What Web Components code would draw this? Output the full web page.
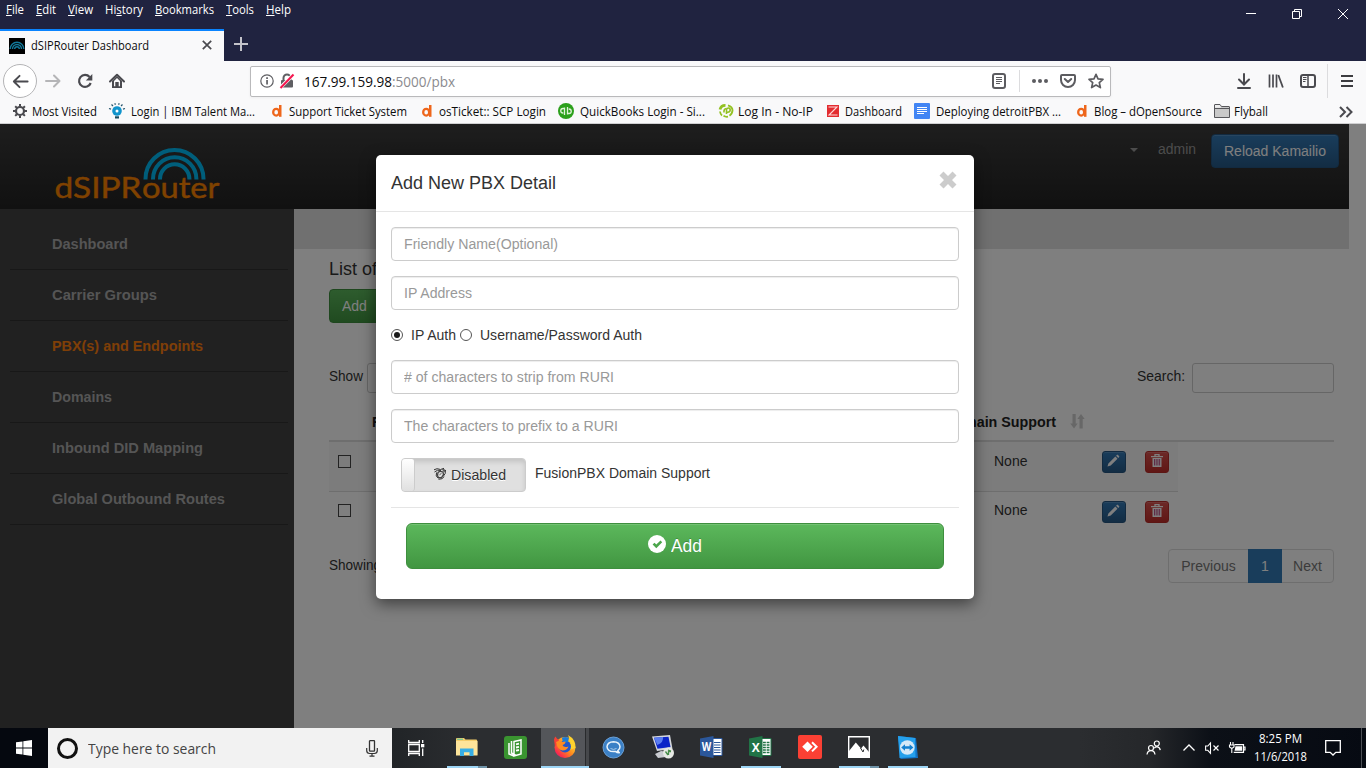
<!DOCTYPE html>
<html lang="en">
<head>
<meta charset="utf-8">
<title>dSIPRouter Dashboard</title>
<style>
html,body{margin:0;height:100%;overflow:hidden;background:#202340}
</style>
</head>
<body>
<browser-window></browser-window>
<script>
const define = (name, html, setup) => customElements.define(name, class extends HTMLElement {
  connectedCallback() {
    if (this.shadowRoot) return;
    this.attachShadow({mode: 'open'}).innerHTML = html;
    if (setup) setup(this, this.shadowRoot);
  }
});
const UI = "font-family:'Open Sans','Noto Sans',sans-serif;";
const WEB = "font-family:'Liberation Sans',Arial,sans-serif;";

/* One line of text condensed or widened to the given width */
define('fit-text', `<style>:host{display:block;white-space:nowrap;flex:none}span{display:inline-block;transform-origin:0 50%}</style><span><slot></slot></span>`,
  (h, r) => {
    const s = r.querySelector('span'), w = +h.getAttribute('w');
    if (!w) return;
    h.style.width = w + 'px';
    const fit = () => { s.style.transform = ''; const n = s.getBoundingClientRect().width; if (n) s.style.transform = `scaleX(${w / n})`; };
    fit();
    requestAnimationFrame(fit);
  });

/* Icon set */
const ICONS = {
  back: [20,20,'<path d="M17.5 10H3M9 4L3 10l6 6" fill="none" stroke="#4a4a4f" stroke-width="2" stroke-linecap="round" stroke-linejoin="round"/>'],
  fwd: [16,16,'<path d="M1 8h13M9 2.5L14.500 8 9 13.500" fill="none" stroke="#b5b5b7" stroke-width="2" stroke-linecap="round" stroke-linejoin="round"/>'],
  reload: [16,16,'<path d="M12.600 4A6 6 0 1 0 13.700 10" fill="none" stroke="#4a4a4f" stroke-width="2.200"/><path d="M15.300 1v6.500H8.800z" fill="#4a4a4f"/>'],
  home: [16,16,'<path d="M1 8.500L8 1.700l7 6.800" fill="none" stroke="#4a4a4f" stroke-width="2" stroke-linecap="round" stroke-linejoin="round"/><path d="M3 8l5-5 5 5v7H3z" fill="#4a4a4f"/><path d="M5 8l3-3 3 3v5.200H9.700V9H6.300v4.200H5z" fill="#f9f9fa"/><path d="M7 9.500h2V12H7z" fill="#4a4a4f"/>'],
  info: [14,14,'<circle cx="7" cy="7" r="6.200" fill="none" stroke="#5f5f63" stroke-width="1.200"/><path d="M6.200 6h1.700v4.500H6.200zM6.200 3.300h1.700v1.600H6.200z" fill="#5f5f63"/>'],
  lock: [16,16,'<path d="M4.500 8V5a3.500 3.500 0 0 1 7 0v3" fill="none" stroke="#5f5f63" stroke-width="2"/><rect x="2" y="7" width="12" height="7.500" rx="1" fill="#5f5f63"/><path d="M1.500 14.500L14.500 1.500" stroke="#fff" stroke-width="3.600"/><path d="M1.500 15L14.500 1.500" stroke="#f5164e" stroke-width="2"/>'],
  reader: [14,16,'<rect x="1" y="1" width="12" height="14" rx="2" fill="none" stroke="#5c5c60" stroke-width="2"/><path d="M4 4.500h6M4 6.500h6M4 8.500h6M4 10.500h4" stroke="#5c5c60"/>'],
  dots: [16,16,'<g fill="#5c5c60"><circle cx="2" cy="8" r="2"/><circle cx="8" cy="8" r="2"/><circle cx="14" cy="8" r="2"/></g>'],
  pocket: [16,16,'<path d="M2 2h12q1 0 1 1v4a7 7 0 0 1-14 0V3q0-1 1-1z" fill="none" stroke="#5c5c60" stroke-width="2"/><path d="M4.800 6L8 9l3.200-3" fill="none" stroke="#5c5c60" stroke-width="2" stroke-linecap="round" stroke-linejoin="round"/>'],
  star: [16,16,'<path d="M8 1.300l2 4.500 5 .5-3.700 3.300 1.100 5L8 12l-4.400 2.600 1.100-5L1 6.300l5-.5z" fill="none" stroke="#5c5c60" stroke-width="1.700" stroke-linejoin="round"/>'],
  down: [14,16,'<path d="M7 1v10M2 6.500L7 11.500l5-5M1 15h12" fill="none" stroke="#4a4a4f" stroke-width="2" stroke-linecap="round"/>'],
  lib: [16,16,'<path d="M1.500 1.500v13M5 1.500v13M8.500 1.500v13" stroke="#4a4a4f" stroke-width="1.700"/><path d="M10.300 2l4.600 12.500" stroke="#4a4a4f" stroke-width="1.800"/>'],
  side: [16,16,'<rect x="1" y="2" width="14" height="12" rx="2" fill="none" stroke="#4a4a4f" stroke-width="2"/><path d="M8 2v12" stroke="#4a4a4f" stroke-width="1.500"/><path d="M3 4.500h3.500M3 6.500h3.500M3 8.500h2.500" stroke="#4a4a4f"/>'],
  menu: [14,14,'<path d="M1 2h12M1 7h12M1 12h12" stroke="#3c3c40" stroke-width="2"/>'],
  gear: [16,16,'<circle cx="8" cy="8" r="4" fill="none" stroke="#4a4a4f" stroke-width="2.200"/><g stroke="#4a4a4f" stroke-width="2"><path d="M8 1v2.500M8 12.500V15M1 8h2.500M12.500 8H15M3.200 3.200l1.700 1.700M11.200 11.200l1.700 1.700M3.200 12.900l1.700-1.700M11.200 4.900l1.700-1.700"/></g>'],
  bulb: [16,16,'<circle cx="8" cy="8" r="4.800" fill="#1194cc"/><circle cx="8" cy="8" r="1.500" fill="#fff"/><path d="M6 13.300h4V15.500H6z" fill="#174a5e"/><g stroke="#24536a" stroke-width="1.200"><path d="M0 5.500l2 .6M16 5.500l-2 .6M2.500 1.500L4 3M13.500 1.500L12 3M5.800.2l.6 1.600M10.200.2l-.6 1.600"/></g>'],
  d: [16,16,'<ellipse cx="7.200" cy="9.200" rx="3" ry="3.400" fill="none" stroke="#ee661b" stroke-width="2.300"/><path d="M10 2h2.500v11.800H10z" fill="#ee661b"/>'],
  qb: [16,16,'<circle cx="8" cy="8" r="8" fill="#2ca01c"/><g fill="none" stroke="#dff3d8" stroke-width="1.300"><path d="M6.500 4.500v7.500M6.500 5.500H5a2.200 2.200 0 0 0 0 4.500h.3M9.500 11.500V4M9.500 10.500H11a2.200 2.200 0 0 0 0-4.500h-.3"/></g>'],
  noip: [16,16,'<g fill="none" stroke="#93c122"><path d="M7.500 2.300A5.500 5.500 0 0 0 2 6.500" stroke-width="2.800"/><path d="M2 8.500q.3 2.500 2 4" stroke-width="1.800"/><path d="M5.500 12.800q2 1.300 4.500.9" stroke-width="1.800"/><path d="M6 9.500q-.5-3.500 2.500-4" stroke-width="1.600"/><path d="M8.500 11V6.500q.5-1.800 2.500-1.500 1.700.8 1 3-1 1.500-3 1.300" stroke-width="1.600"/><path d="M10 2.300q4.500 1.200 4.500 5.200-.3 3.500-3 5.200" stroke-width="1.900"/></g>'],
  z: [12,12,'<path d="M0 0h12v12H0z" fill="#e32c30"/><path d="M1.500 2H10L2 10h8.500" fill="none" stroke="#ffd9d9" stroke-width="1.100"/>'],
  doc: [16,16,'<rect width="16" height="16" rx="1" fill="#4285f4"/><path d="M3 4.500h10M3 6.500h10M3 8.500h10M3 10.500h7" stroke="#fff"/>'],
  folder: [16,14,'<path d="M.5 13.500V1q0-.5.5-.5h5l1.500 2H15q.5 0 .5.500v10.500z" fill="#c9c9c9" stroke="#57575b"/><path d="M1 4.500h14" stroke="#57575b"/><path d="M1 1h4.800l1.200 2.700H1z" fill="#eee"/>'],
  chev: [14,12,'<path d="M1 1l5 5-5 5M7.500 1l5 5-5 5" fill="none" stroke="#4a4a4f" stroke-width="2"/>'],
  fav: [16,16,'<path d="M0 0h16v16H0z" fill="#000"/><g fill="none" stroke="#127798" stroke-width="1.400"><path d="M1.200 11a6.800 6.800 0 0 1 13.600 0M3.500 11a4.500 4.500 0 0 1 9 0M5.700 11a2.300 2.300 0 0 1 4.600 0"/></g>'],
  x: [10,10,'<path d="M.8.8l8.400 8.400M9.200.8L.8 9.200" stroke="#4a4a4f" stroke-width="1.700"/>'],
  plus: [14,14,'<path d="M7 0v14M0 7h14" stroke="#c3c3ca" stroke-width="2"/>'],
  min: [10,10,'<path d="M0 4.500h10" stroke="#fff"/>'],
  max: [10,10,'<path d="M.5 2.500h7v7h-7zM2.500 2.500v-2h7v7h-2" fill="none" stroke="#fff"/>'],
  close: [10,10,'<path d="M0 0l10 10M10 0L0 10" stroke="#fff"/>'],
  bigx: [18,18,'<path d="M4.500.5L9 5 13.500.5l4 4L13 9l4.500 4.500-4 4L9 13l-4.500 4.500-4-4L5 9 .5 4.500z" fill="#ccc"/>'],
  hand: [12,12,'<path d="M0 1.800Q3-.3 6.500 1.500L10 .3M.5 4Q3.500 1.200 7 2.500M11.500 2Q12 6 9 8.500M2.500 4.500Q1.300 8.500 4 10M4.500 11.300Q8.500 11.500 10.300 8.500" fill="none" stroke="#333"/><path d="M4 4.500q2-1.800 5-.5l.5 2.500-2 3-3 .2-1-2.200z" fill="none" stroke="#444" stroke-width="1.300"/><path d="M5.500 6.800l2-1.500M8.500 1.500l2.200.3-.5 2z" stroke="#555" fill="#555"/>'],
  ok: [18,18,'<circle cx="9" cy="9" r="9" fill="#fff"/><path d="M4.600 9.600l1.900-1.900 1.800 1.700 4.200-4 1.700 1.900-5.900 6z" fill="#4ca64c"/>'],
  sort: [15,15,'<path d="M2.500 0h3.200v9.500h2L4 14.500.2 9.500h2.300zM9.500 14.500h3.200V5h2L11 0 7.300 5h2.200z" fill="#cfcfcf"/>'],
  pencil: [14,14,'<path d="M.5 13.500l1-3.300L9 2.700l2.300 2.300L4 12.500zM9.800 1.900l1-1q.3-.4.800 0l1.500 1.500q.3.400 0 .8l-1 1z" fill="#fff"/>'],
  trash: [12,13,'<path d="M4 2V.6h4V2M0 2.600h12" fill="none" stroke="#fff" stroke-width="1.300"/><path d="M1.500 4h9v9h-9z" fill="#fff"/><path d="M3.500 5v6.500M5.200 5v6.500M6.900 5v6.500M8.600 5v6.500" stroke="#b8437f" stroke-width=".9"/>'],
  win: [16,16,'<path d="M0 2.300l6.500-.9v6.200H0zM7.300 1.300L16 0v7.600H7.300zM0 8.400h6.500v6.200L0 13.700zM7.300 8.400H16V16l-8.700-1.300z" fill="#fff"/>'],
  mic: [12,17,'<rect x="3.500" y=".7" width="5" height="10.500" rx=".5" fill="none" stroke="#333" stroke-width="1.300"/><path d="M.7 8v2.500q0 3 3 3h4.600q3 0 3-3V8M6 13.500v2.700M3.500 16.200h5" fill="none" stroke="#333" stroke-width="1.200"/>'],
  task: [17,16,'<path d="M.7 0v2.500h10.600V0M.7 16v-2.500h10.600V16M.7 4.500h10.600v7H.7zM14.700 0v3M14.700 8.500V16" fill="none" stroke="#fff" stroke-width="1.300"/><path d="M13 4h3.300v3.300H13z" fill="#fff"/>'],
  explorer: [22,20,'<path d="M0 2q0-1 1-1h7l1.500 1.500H20q1.200 0 1.200 1V18H0z" fill="#f4cd6a"/><path d="M0 4h21.500v14.500H0z" fill="#fde49a"/><path d="M4 11.500h13.500V19H13.500v-3.800H8V19H4z" fill="#38aee4"/><path d="M1 1.700h6v1H1z" fill="#4fc3a1"/>'],
  green: [23,23,'<rect width="23" height="23" rx="3" fill="#3a9430"/><g fill="none" stroke="#fff" stroke-width="1.500"><path d="M5 7v11l5 2M7.500 5v12l4.500 2.500M10 5.500l7-1.500v14L10 20z"/><path d="M12 8.300l3-.7M12 11.500l3-.7M12 14.700l3-.7" stroke-width="1.800"/></g>'],
  firefox: [24,24,'<defs><linearGradient id="f" x1="1" y1="0" x2="0" y2="1"><stop offset=".15" stop-color="#ffdc35"/><stop offset=".5" stop-color="#ff8a1d"/><stop offset=".8" stop-color="#fb2c4c"/><stop offset="1" stop-color="#c41991"/></linearGradient></defs><circle cx="12" cy="12.500" r="10.500" fill="url(#f)"/><path d="M15 0q8 4.500 7.500 13l-6 2q2-8-1.500-15z" fill="#ffd32e"/><path d="M1 4.500q.5-2 1.500-3 1 2 3.500 3.500L2 12z" fill="#f64036"/><circle cx="12" cy="11.500" r="6" fill="#2456c8"/><path d="M9 3q3-2 7 0l-1 4-5 1z" fill="#1c7bd8"/><path d="M3 7q3.500-2 6.500 0l3-.5q0 2.500-3 3.500 1 3 6 1.500-1.500 4-6 4-5-.5-6.500-8.500z" fill="#ff8b22"/>'],
  chat: [23,23,'<circle cx="11.500" cy="11.500" r="10.500" fill="#3b80c6" stroke="#6ba0d6"/><path d="M15.800 14.600q2.200-1.500 2.200-3.900-.4-4.700-6.500-4.900-6.100.2-6.500 4.900.4 4.700 6.500 4.900l2-.2q1.500 1.400 3.800 1.300-1.300-.9-1.500-2.100z" fill="none" stroke="#eaf3fb" stroke-width="1.500" stroke-linejoin="round"/><path d="M8.500 12.500q3 1.800 6 0" fill="none" stroke="#a9cbea"/>'],
  putty: [24,24,'<path d="M1 1.500L19 0l2.500 14L6 16z" fill="#d4d7dc"/><path d="M3 2.800L17.500 1.700 19.500 12 6.500 13.800z" fill="#0a24c8"/><path d="M3 2.800l9-.7q1 5-5.700 8z" fill="#5a7df0"/><path d="M4 19l6-3 8 1-3 5-8 1z" fill="#c9cbd0"/><circle cx="17.500" cy="18" r="5.500" fill="#e6e9e4"/><path d="M14.500 16.500l2.500 3.500M17.500 20v-3.500h2.500M17 15l3 1" fill="none" stroke="#478d4a" stroke-width="1.300"/>'],
  word: [23,22,'<path d="M12 2.500h10v17H12z" fill="#fff" stroke="#2b579a"/><path d="M14 6.500h6.500M14 9h6.500M14 11.500h6.500M14 14h6.500M14 16.500h6.500" stroke="#2b579a" stroke-width="1.200"/><path d="M0 2.500L13.500 0v22L0 19.500z" fill="#2b579a"/><text x="1.800" y="15.300" font-size="11.500" font-weight="bold" fill="#fff" font-family="Open Sans" textLength="9.500" lengthAdjust="spacingAndGlyphs">W</text>'],
  excel: [23,22,'<path d="M12 2.500h10v17H12z" fill="#fff" stroke="#217346"/><path d="M14 6.500h6.500M14 9h6.500M14 11.500h6.500M14 14h6.500M14 16.500h6.500" stroke="#217346" stroke-width="1.500"/><path d="M17.300 5v13" stroke="#fff" stroke-width=".8"/><path d="M0 2.500L13.500 0v22L0 19.500z" fill="#217346"/><text x="2.700" y="15.500" font-size="12" font-weight="bold" fill="#fff" font-family="Open Sans">X</text>'],
  any: [24,24,'<rect width="24" height="24" rx="2" fill="#fb4034"/><path d="M9.500 6.500l5.300 5.300-5.300 5.300-5.300-5.300z" fill="#fff"/><path d="M14 7.200l4.600 4.600-4.600 4.600" fill="none" stroke="#fb4034" stroke-width="4.500"/><path d="M14 7.200l4.600 4.600-4.600 4.600" fill="none" stroke="#fff" stroke-width="2"/>'],
  photo: [22,22,'<path d="M.7.700h20.600v20.600H.7z" fill="none" stroke="#fff" stroke-width="1.400"/><path d="M1 15l6.800-8.500 5.200 6 2.500-3L21 16v5.500H1z" fill="#fff"/><path d="M12.500 12l2.500 4 .8-2.500" stroke="#2a2d30" fill="none"/>'],
  tv: [20,23,'<path d="M0 0l18 2 2 20-17.500 1z" fill="#1272c4"/><path d="M0 0l17 2 .5 19L1.500 22z" fill="#25a0ec"/><circle cx="9.300" cy="11.500" r="7.300" fill="#d5e9f8"/><path d="M3.200 11.500L7 8.300v2h4.600v-2l3.800 3.200-3.800 3.200v-2H7v2z" fill="#1480d0"/>'],
  people: [16,16,'<g fill="none" stroke="#fff" stroke-width="1.200"><circle cx="10.800" cy="3.500" r="2.500"/><circle cx="5" cy="8" r="2.500"/><path d="M8.300 8.300Q9 6.700 10.800 6.600q3 .3 3.500 3.600M1 14.500q.5-3.900 4-3.900t4 3.900"/></g>'],
  up: [12,8,'<path d="M.5 6.500L6 1l5.500 5.500" fill="none" stroke="#fff" stroke-width="1.300"/>'],
  mute: [14,12,'<path d="M.6 4h2.200L5.500 1v10.300L2.800 8.300H.6z" fill="none" stroke="#fff" stroke-width="1.100"/><path d="M8.500 3.500l5 5M13.500 3.500l-5 5" stroke="#fff" stroke-width="1.200"/>'],
  batt: [17,12,'<path d="M5.500 2.700h9v7.600H4.700M14.500 5h1.500v3h-1.500" fill="none" stroke="#fff" stroke-width="1.200"/><path d="M6.500 4.300h6.700v4.500H5.500z" fill="#fff"/><path d="M1.500 0v2.500M4 0v2.500M.5 3h4.500v2L2.800 6.500.5 5zM2.800 6v5" fill="none" stroke="#fff" stroke-width="1.100"/>'],
  note: [16,16,'<path d="M.7.700h14.600v11.600h-4.500L8 15l-2.800-2.700H.7z" fill="none" stroke="#fff" stroke-width="1.300"/>']
};
define('ui-icon', `<style>:host{display:block;flex:none;line-height:0}svg{display:block;overflow:visible}</style>`, (h, r) => {
  const [w, t, body] = ICONS[h.getAttribute('n')];
  const k = +h.getAttribute('k') || 1;
  r.innerHTML += `<svg width="${w*k}" height="${t*k}" viewBox="0 0 ${w} ${t}">${body}</svg>`;
});

/* Browser chrome */
define('title-bar', `<style>
:host{display:grid;grid-template-rows:29px 32px;background:#202340;color:#fff;${UI}font-size:12px;height:61px}
.top,.tabs{display:flex}
.menu{display:flex;padding:0 0 0 6px;line-height:20px;flex:1}
.ctl{display:flex;gap:36px;padding:9px 18px 0 0}
.tab{width:224px;box-sizing:border-box;border-top:2px solid #0a84ff;background:#f9f9fa;color:#0c0c0d;display:flex;align-items:center;padding:0 12px 0 9px;font-size:12px}
.tab .x{margin-left:auto}.tab fit-text{margin:0 0 1px 6px}
.plus{padding:8px 0 0 10px}
</style>
<div class="top"><div class="menu"><fit-text w="18" style="margin-right:12px"><u>F</u>ile</fit-text><fit-text w="20" style="margin-right:12px"><u>E</u>dit</fit-text><fit-text w="25" style="margin-right:12px"><u>V</u>iew</fit-text><fit-text w="38" style="margin-right:12px">Hi<u>s</u>tory</fit-text><fit-text w="59" style="margin-right:12px"><u>B</u>ookmarks</fit-text><fit-text w="28" style="margin-right:12px"><u>T</u>ools</fit-text><fit-text w="25"><u>H</u>elp</fit-text></div>
<div class="ctl"><ui-icon n="min"></ui-icon><ui-icon n="max"></ui-icon><ui-icon n="close"></ui-icon></div></div>
<div class="tabs"><div class="tab"><ui-icon n="fav" style="margin-bottom:1px"></ui-icon><fit-text w="118">dSIPRouter Dashboard</fit-text><ui-icon class="x" n="x" style="margin-bottom:2px"></ui-icon></div><div class="plus"><ui-icon n="plus"></ui-icon></div></div>`);

define('nav-bar', `<style>
:host{display:flex;align-items:center;height:40px;background:#f9f9fa;${UI}box-sizing:border-box;padding-left:3px}
.back{width:34px;height:34px;border:1px solid #b4b4b6;border-radius:50%;background:#fff;display:grid;place-items:center;box-sizing:border-box}
.url{margin-left:125px;width:861px;height:31px;box-sizing:border-box;border:1px solid #b9b9bb;border-radius:2px;background:#fff;display:flex;align-items:center;font-size:14px;color:#0c0c0d;box-shadow:0 1px 3px rgba(0,0,0,.05);padding-left:9px}
.url i{font-style:normal;color:#8a8a8e}
.sep{width:1px;height:22px;background:#dcdcde}
.sep.t{height:34px}
</style>
<div class="back"><ui-icon n="back" k=".95"></ui-icon></div><ui-icon n="fwd" style="margin-left:8px"></ui-icon><ui-icon n="reload" style="margin-left:16px"></ui-icon><ui-icon n="home" style="margin-left:16px"></ui-icon>
<div class="url"><ui-icon n="info"></ui-icon><ui-icon n="lock" style="margin-left:5px"></ui-icon><fit-text w="151" style="margin-left:9px">167.99.159.98<i>:5000/pbx</i></fit-text>
<ui-icon n="reader" style="margin-left:537px"></ui-icon><div class="sep" style="margin-left:13px"></div><ui-icon n="dots" style="margin-left:12px"></ui-icon><ui-icon n="pocket" style="margin-left:12px"></ui-icon><ui-icon n="star" style="margin-left:12px"></ui-icon></div>
<ui-icon n="down" style="margin-left:126px"></ui-icon><ui-icon n="lib" style="margin-left:17px"></ui-icon><ui-icon n="side" style="margin-left:16px"></ui-icon><div class="sep t" style="margin-left:11px"></div><ui-icon n="menu" style="margin-left:12px"></ui-icon>`);

define('book-mark', `<style>:host{display:flex;align-items:center;flex:none;height:22px}fit-text{margin-left:var(--g,4px);margin-bottom:1px}.i{width:16px;display:grid;place-items:center;margin-bottom:1px}</style><div class="i"></div><fit-text></fit-text>`, (h, r) => {
  r.querySelector('.i').innerHTML = `<ui-icon n="${h.getAttribute('icon')}"></ui-icon>`;
  const f = document.createElement('fit-text');
  f.setAttribute('w', h.getAttribute('w'));
  f.textContent = h.getAttribute('label');
  r.querySelector('fit-text').replaceWith(f);
});
define('bookmarks-bar', `<style>:host{display:flex;height:23px;box-sizing:border-box;background:#f9f9fa;border-bottom:1px solid #cfcfd1;padding:0 13px 1px 12px;${UI}font-size:12px;color:#0c0c0d;align-items:center}.c{margin-left:auto}</style>
<book-mark icon="gear" w="65" label="Most Visited"></book-mark>
<book-mark icon="bulb" w="124" label="Login | IBM Talent Ma..." style="margin-left:12px;--g:6px"></book-mark>
<book-mark icon="d" w="118" label="Support Ticket System" style="margin-left:14px"></book-mark>
<book-mark icon="d" w="107" label="osTicket:: SCP Login" style="margin-left:12px"></book-mark>
<book-mark icon="qb" w="125" label="QuickBooks Login - Si..." style="margin-left:12px;--g:6px"></book-mark>
<book-mark icon="noip" w="75" label="Log In - No-IP" style="margin-left:13px"></book-mark>
<book-mark icon="z" w="57" label="Dashboard" style="margin-left:12px"></book-mark>
<book-mark icon="doc" w="125" label="Deploying detroitPBX ..." style="margin-left:12px;--g:6px"></book-mark>
<book-mark icon="d" w="108" label="Blog – dOpenSource" style="margin-left:13px"></book-mark>
<book-mark icon="folder" w="34" label="Flyball" style="margin-left:12px"></book-mark>
<ui-icon class="c" n="chev"></ui-icon>`);

/* Web page */
define('site-header', `<style>
:host{display:flex;justify-content:space-between;height:85px;box-sizing:border-box;width:1349px;background:linear-gradient(#3c3c3c,#222);${WEB}font-size:14px;color:#999}
.r{display:flex;padding:10px 10px 0 0}
.caret{border:4px solid transparent;border-top-color:#999;height:0;margin:14px 20px 0 0}
.b{margin-left:15px;box-sizing:border-box;width:128px;height:34px;border:1px solid #245580;border-radius:4px;background:linear-gradient(#337ab7,#265a88);color:#fff;line-height:33px;padding-left:12px;box-shadow:inset 0 1px 0 rgba(255,255,255,.15)}
</style>
<svg width="240" height="85"><g fill="none" stroke="#00bdf7" stroke-width="4"><path d="M145.500 55.500V55a29 29 0 0 1 58 0v.5M153 55.500V55a21.700 21.700 0 0 1 43.400 0v.5M160 55.500V55a14.700 14.700 0 0 1 29.400 0v.5"/></g><g fill="#ff8500" stroke="#ff8500" stroke-width=".4" font-family="Lato" font-size="28.500"><text x="54.500" y="73.500" textLength="87" lengthAdjust="spacingAndGlyphs">dSIPR</text><text x="142" y="73.500" textLength="77.500" lengthAdjust="spacingAndGlyphs">outer</text></g></svg>
<div class="r"><div class="caret"></div><fit-text w="38" style="line-height:30px">admin</fit-text><div class="b"><fit-text w="102">Reload Kamailio</fit-text></div></div>`);

define('side-item', `<style>:host{display:block;height:51px;box-sizing:border-box;border-bottom:1px solid #303030;margin:0 6px 0 10px;padding-left:42px;line-height:51px;color:#aaa;font-weight:bold}:host([on]){color:#ff7f0e}</style><slot></slot>`);
define('side-bar', `<style>:host{display:block;width:294px;box-sizing:border-box;padding-top:10px;background:#424242;${WEB}font-size:14px}</style>
<side-item><fit-text w="76">Dashboard</fit-text></side-item><side-item><fit-text w="105">Carrier Groups</fit-text></side-item><side-item on><fit-text w="151">PBX(s) and Endpoints</fit-text></side-item><side-item><fit-text w="60">Domains</fit-text></side-item><side-item><fit-text w="151">Inbound DID Mapping</fit-text></side-item><side-item><fit-text w="173">Global Outbound Routes</fit-text></side-item>`);

define('data-row', `<style>
:host{display:grid;grid-template-columns:665px 108px 43px 33px;width:849px;height:50px;box-sizing:border-box}
:host([odd]){background:#f9f9f9;border-bottom:1px solid #ddd}
.c{width:13px;height:13px;box-sizing:border-box;border:1px solid #444;margin:12px 0 0 9px}
.t{padding-top:10px;line-height:17px}
:host([odd]) .c{margin-top:13px}:host([odd]) .t{padding-top:11px}
.b{margin-top:9px;width:24px;height:22px;box-sizing:border-box;border-radius:3px;border:1px solid #245580;background:linear-gradient(#337ab7,#265a88);display:grid;place-items:center;padding-bottom:2px;box-shadow:inset 0 1px 0 rgba(255,255,255,.15)}
.b.d{border-color:#b92c28;background:linear-gradient(#d9534f,#c12e2a);padding-bottom:3px}
</style><div class="c"></div><div class="t">None</div><div class="b"><ui-icon n="pencil" k=".93"></ui-icon></div><div class="b d"><ui-icon n="trash"></ui-icon></div>`);

define('page-main', `<style>
:host{display:block;flex:1;background:#fff;${WEB}font-size:14px;color:#333}
.band{height:40px;width:1055px;background:#e0e0e0}
.in{width:1005px;margin-left:35px}
.h{font-size:18px;line-height:20px;padding-top:10px;height:30px}
.add{box-sizing:border-box;width:68px;height:34px;border:1px solid #3e8f3e;border-radius:4px;background:linear-gradient(#5cb85c,#419641);color:#fff;line-height:33px;padding-left:12px}
.f{display:flex;justify-content:space-between;margin-top:40px;line-height:27px}
.f div{display:flex}
.sel{width:75px;margin-left:4px}.inp{width:142px;margin-left:7px}
.sel,.inp{height:30px;box-sizing:border-box;border:1px solid #ccc;border-radius:3px}
.th{height:49px;box-sizing:border-box;border-bottom:2px solid #ddd;display:flex;font-weight:bold;line-height:17px;padding:21px 0 0 43px;color:#222}
.e{width:573px}
.p{display:flex;justify-content:space-between;margin-top:7px;line-height:34px}
.pg{display:flex;box-sizing:border-box;width:166px;height:34px;border:1px solid #ddd;border-radius:4px;color:#777;line-height:32px}
.pg b{font-weight:normal;background:#337ab7;color:#fff;width:34px;text-align:center;margin:-1px 0;line-height:34px}
.pg span{width:79px;text-align:center}.pg span+b+span{width:51px}
</style>
<div class="band"></div><div class="in"><div class="h">List of PBX(s)</div><div class="add">Add</div>
<div class="f"><div><fit-text w="34">Show</fit-text><div class="sel"></div></div><div><fit-text w="48">Search:</fit-text><div class="inp"></div></div></div>
<div class="th"><span class="e">F</span><fit-text w="111">Domain Support</fit-text><ui-icon n="sort" style="margin:0 0 0 14px"></ui-icon></div>
<data-row odd></data-row><data-row></data-row>
<div class="p"><fit-text w="52" style="line-height:33px">Showing</fit-text><div class="pg"><span>Previous</span><b>1</b><span>Next</span></div></div></div>`);

define('text-field', `<style>:host{display:block;height:34px;box-sizing:border-box;border:1px solid #ccc;border-radius:4px;line-height:32px;padding-left:12px;color:#999;box-shadow:inset 0 1px 1px rgba(0,0,0,.075);margin-bottom:15px}</style><slot></slot>`);
define('pbx-modal', `<style>
:host{display:block;width:598px;height:444px;box-sizing:border-box;background:#fff;border-radius:5px;box-shadow:0 5px 15px rgba(0,0,0,.5);${WEB}font-size:14px;color:#333}
.h{height:57px;box-sizing:border-box;border-bottom:1px solid #e5e5e5;padding:16px 17px 0 15px;display:flex;justify-content:space-between;font-size:18px;line-height:24px}
.b{padding:15px}
.r{display:flex;align-items:center;height:20px;margin-bottom:15px}
.o{width:12px;height:12px;box-sizing:border-box;border:1px solid #555;border-radius:50%;display:grid;place-items:center}
.o i{width:6px;height:6px;border-radius:50%;background:#1a1a1a}
.t{display:flex;padding-left:10px}
.tg{width:125px;height:34px;box-sizing:border-box;border:1px solid #ccc;border-radius:4px;background:#e0e0e0;box-shadow:inset 0 3px 5px rgba(0,0,0,.125);display:flex;text-shadow:0 1px 0 #fff}
.k{width:13px;height:32px;box-sizing:border-box;background:linear-gradient(#fff,#e0e0e0);border-right:1px solid #ccc;border-radius:3px;margin-right:19px}
hr{border:0;border-top:1px solid #e5e5e5;margin:15px 0}
.add{margin:0 15px;height:46px;box-sizing:border-box;border:1px solid #3e8f3e;border-radius:6px;background:linear-gradient(#5cb85c,#419641);color:#fff;font-size:18px;display:flex;justify-content:center;align-items:center;gap:5px;text-shadow:0 -1px 0 rgba(0,0,0,.2);box-shadow:inset 0 1px 0 rgba(255,255,255,.15)}
</style>
<div class="h"><fit-text w="165">Add New PBX Detail</fit-text><ui-icon n="bigx"></ui-icon></div>
<div class="b"><text-field><fit-text w="154">Friendly Name(Optional)</fit-text></text-field><text-field><fit-text w="68">IP Address</fit-text></text-field>
<div class="r"><div class="o"><i></i></div><fit-text w="45" style="margin:0 4px 0 8px">IP Auth</fit-text><div class="o"></div><fit-text w="162" style="margin-left:8px">Username/Password Auth</fit-text></div>
<text-field><fit-text w="210"># of characters to strip from RURI</fit-text></text-field><text-field><fit-text w="214">The characters to prefix to a RURI</fit-text></text-field>
<div class="t"><div class="tg"><div class="k"></div><ui-icon n="hand" style="margin-top:9px"></ui-icon><fit-text w="55" style="margin-left:5px;line-height:33px">Disabled</fit-text></div><fit-text w="175" style="margin-left:9px;line-height:31px">FusionPBX Domain Support</fit-text></div>
<hr><div class="add"><ui-icon n="ok" style="margin-bottom:4px"></ui-icon><fit-text w="31">Add</fit-text></div></div>`);

define('web-page', `<style>
:host{display:block;position:relative;height:604px;background:#fff;overflow:hidden}
.row{display:flex;height:519px}
.veil{position:absolute;inset:0;background:rgba(0,0,0,.5);display:flex;justify-content:center;align-items:flex-start;padding:31px 16px 0 0}
</style><site-header></site-header><div class="row"><side-bar></side-bar><page-main></page-main></div><div class="veil"><pbx-modal></pbx-modal></div>`);

/* Desktop task bar */
define('task-app', `<style>
:host{display:grid;grid-template-rows:38px 2px;width:49px;justify-items:center;flex:none}
.i{display:grid;place-items:center;width:48px;height:100%}
:host([active]) .i{background:linear-gradient(90deg,#54565a 44px,#292b2d 44px 45px,#46484b 45px)}
.u{width:40px}
:host([open]) .u{background:#9dd5f5}:host([multi]) .u{background:linear-gradient(90deg,#9dd5f5 31px,#6f93a8 31px)}
:host([active]) .u{width:48px}
</style><div class="i"></div><div class="u"></div>`, (h, r) => r.querySelector('.i').innerHTML = `<ui-icon n="${h.getAttribute('n')}"></ui-icon>`);
define('task-bar', `<style>
:host{display:flex;height:40px;background:linear-gradient(90deg,#05080f 0 48px,#212427 392px,#2b2d30 470px 1080px,#25272a 1150px,#0c1017 1210px,#060a12 1366px);${UI}color:#fff;align-items:stretch}
.s{width:48px;display:grid;place-items:center;flex:none}
.q{width:344px;box-sizing:border-box;background:#f2f2f2;display:flex;align-items:center;padding:0 14px 0 9px;color:#444;font-size:15px}
.o{width:21px;height:21px;box-sizing:border-box;border:3px solid #111;border-radius:50%}
.q .m{margin-left:auto}
.tv{width:49px;display:grid;place-items:center;flex:none}
.tray{margin-left:auto;display:flex;align-items:center}
.clk{font-size:12px;line-height:18px;display:flex;flex-direction:column;align-items:center;margin:0 18px 0 8px}
.end{width:1px;height:40px;background:#4b4e54;margin:0 4px 0 20px}
</style>
<div class="s"><ui-icon n="win"></ui-icon></div>
<div class="q"><div class="o"></div><fit-text w="128" style="margin-left:10px">Type here to search</fit-text><ui-icon class="m" n="mic"></ui-icon></div>
<div class="tv"><ui-icon n="task"></ui-icon></div>
<task-app n="explorer" open multi style="margin-left:1px"></task-app><task-app n="green"></task-app><task-app n="firefox" active open></task-app><task-app n="chat"></task-app><task-app n="putty"></task-app><task-app n="word"></task-app><task-app n="excel" open></task-app><task-app n="any"></task-app><task-app n="photo" open multi></task-app><task-app n="tv" open></task-app>
<div class="tray"><ui-icon n="people"></ui-icon><ui-icon n="up" style="margin-left:21px"></ui-icon><ui-icon n="mute" style="margin-left:10px"></ui-icon><ui-icon n="batt" style="margin-left:10px"></ui-icon><div class="clk"><fit-text w="43">8:25 PM</fit-text><fit-text w="53">11/6/2018</fit-text></div><ui-icon n="note"></ui-icon><div class="end"></div></div>`);

define('browser-window', `<style>:host{display:grid;grid-template-rows:61px 40px 23px 604px 40px;width:1366px;height:768px;overflow:hidden}</style><title-bar></title-bar><nav-bar></nav-bar><bookmarks-bar></bookmarks-bar><web-page></web-page><task-bar></task-bar>`);
</script>
</body>
</html>
